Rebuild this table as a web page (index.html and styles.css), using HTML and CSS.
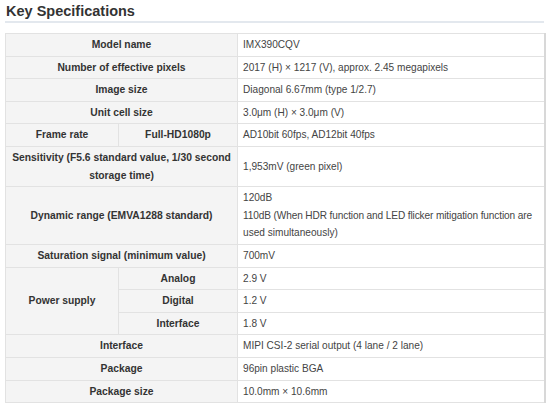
FILE: index.html
```html
<!DOCTYPE html>
<html>
<head>
<meta charset="utf-8">
<link rel="stylesheet" href="styles.css">
</head>
<body>
<div class="page">
  <h2 class="title">Key Specifications</h2>
  <table class="spec">
    <colgroup>
      <col class="c1"><col class="c2"><col class="c3">
    </colgroup>
    <tr><th colspan="2">Model name</th><td>IMX390CQV</td></tr>
    <tr><th colspan="2">Number of effective pixels</th><td>2017 (H) × 1217 (V), approx. 2.45 megapixels</td></tr>
    <tr><th colspan="2">Image size</th><td>Diagonal 6.67mm (type 1/2.7)</td></tr>
    <tr><th colspan="2">Unit cell size</th><td>3.0μm (H) × 3.0μm (V)</td></tr>
    <tr><th>Frame rate</th><th>Full-HD1080p</th><td>AD10bit 60fps, AD12bit 40fps</td></tr>
    <tr><th colspan="2">Sensitivity (F5.6 standard value, 1/30 second storage time)</th><td>1,953mV (green pixel)</td></tr>
    <tr><th colspan="2">Dynamic range (EMVA1288 standard)</th><td>120dB<br><span class="nw">110dB (When HDR function and LED flicker mitigation function are</span> used simultaneously)</td></tr>
    <tr><th colspan="2">Saturation signal (minimum value)</th><td>700mV</td></tr>
    <tr><th rowspan="3">Power supply</th><th>Analog</th><td>2.9 V</td></tr>
    <tr><th>Digital</th><td>1.2 V</td></tr>
    <tr><th>Interface</th><td>1.8 V</td></tr>
    <tr><th colspan="2">Interface</th><td>MIPI CSI-2 serial output (4 lane / 2 lane)</td></tr>
    <tr><th colspan="2">Package</th><td>96pin plastic BGA</td></tr>
    <tr><th colspan="2">Package size</th><td>10.0mm × 10.6mm</td></tr>
  </table>
</div>
</body>
</html>
```
FILE: styles.css
```css
html, body {
  margin: 0;
  padding: 0;
  background: #ffffff;
}
.page {
  padding: 3px 6px 0 5px;
  font-family: "Liberation Sans", Arial, sans-serif;
  color: #333333;
}
.title {
  margin: 0 0 10px 0;
  padding: 0 0 1px 1px;
  font-size: 14.5px;
  line-height: 17px;
  font-weight: bold;
  color: #333333;
  border-bottom: 2px solid #e3e8ee;
}
.spec {
  width: 539px;
  border-collapse: collapse;
  table-layout: fixed;
  font-size: 10.3px;
  line-height: 17.6px;
  border-right: 2px solid #d8d8d8;
}
.c1 { width: 113px; }
.c2 { width: 119px; }
.c3 { width: 307px; }
.spec th, .spec td {
  border: 1px solid #e2e2e2;
  padding: 2px 5px;
  vertical-align: middle;
}
.spec th {
  background: #f4f4f4;
  font-weight: bold;
  text-align: center;
  color: #333333;
}
.spec td {
  padding-right: 1px;
  background: #ffffff;
  text-align: left;
  color: #444444;
  font-size: 10.1px;
}
.nw {
  white-space: nowrap;
  letter-spacing: -0.12px;
}
```
